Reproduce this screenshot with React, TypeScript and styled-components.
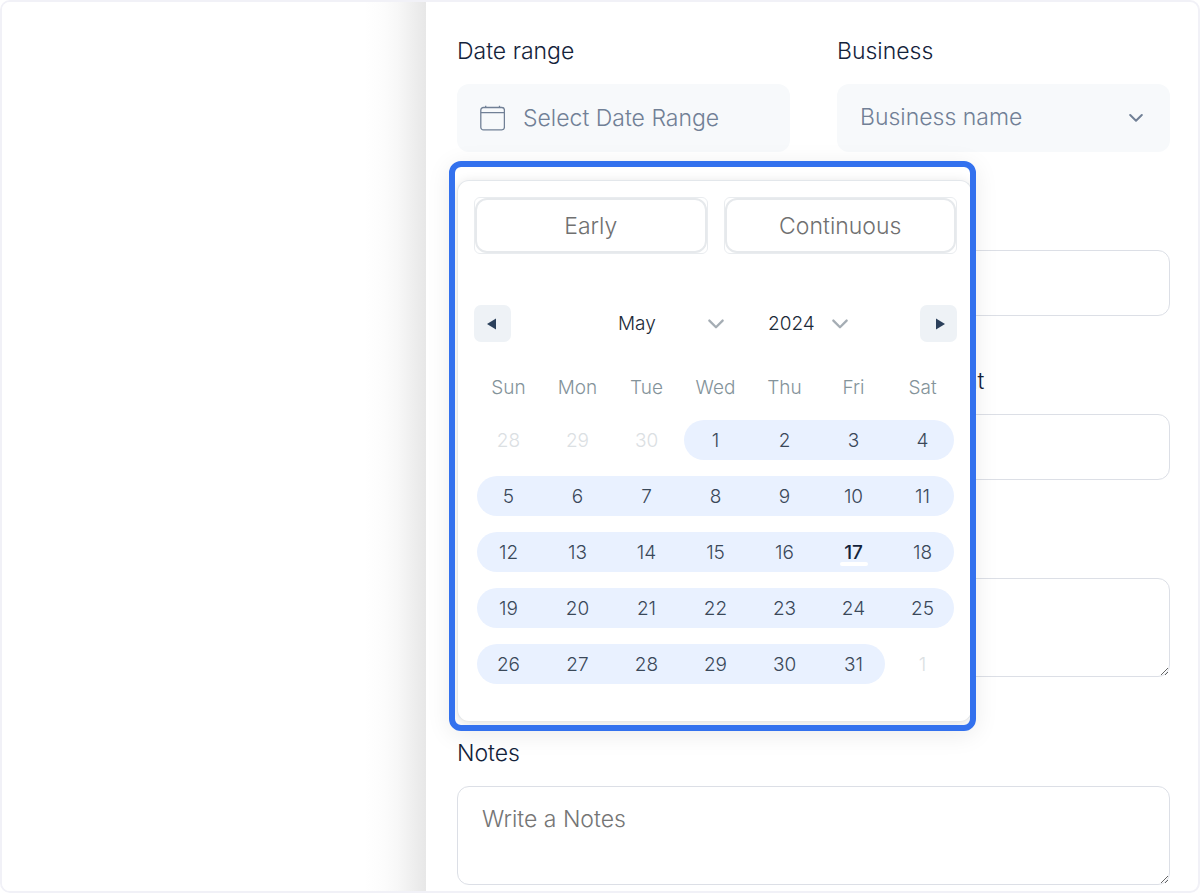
import React from "react";
import styled, { createGlobalStyle, css } from "styled-components";

const GlobalStyle = createGlobalStyle`
  *, *::before, *::after { box-sizing: border-box; }
  body {
    margin: 0;
    background: #fff;
    color: #14233b;
    font-family: Inter, "Open Sans", "Liberation Sans", sans-serif;
    font-weight: 300;
  }
  button, input, select, textarea { font: inherit; color: inherit; }
`;

const Frame = styled.div`
  display: flex;
  min-height: 100vh;
  border: 2px solid #f1f1f7;
  border-radius: 10px;
  overflow: hidden;
`;

const Backdrop = styled.div`
  flex: 1;
  background: linear-gradient(to left, #e7e7e7, #efefef 14px, #f7f7f7 28px, #fcfcfc 42px, #fff 62px);
`;

const Drawer = styled.form`
  flex: 0 1 772px;
  display: grid;
  grid-template-columns: repeat(2, minmax(0, 1fr));
  column-gap: 47px;
  row-gap: 49px;
  align-content: start;
  padding: 33px 28px 5px 31px;
`;

const Field = styled.div<{ $wide?: boolean; $right?: boolean }>`
  position: relative;
  display: flex;
  flex-direction: column;
  gap: 16px;
  ${(p) => p.$wide && css`grid-column: 1 / -1;`}
  ${(p) => p.$right && css`grid-column: 2;`}
`;

const Label = styled.label`
  min-height: 33px;
  font-size: 23px;
  line-height: 33px;
`;

const FilledBox = styled.div`
  position: relative;
  display: flex;
  align-items: center;
  gap: 18px;
  height: 68px;
  padding: 0 27px 0 23px;
  border-radius: 12px;
  background: #f7f9fb;
  color: #718096;
  font-size: 23px;

  > svg { flex: none; pointer-events: none; }
`;

const FilledInput = styled.input`
  flex: 1;
  min-width: 0;
  padding: 0;
  border: 0;
  outline: 0;
  background: transparent;
  &::placeholder { color: #718096; opacity: 1; }
`;

const FilledSelect = styled.select`
  flex: 1;
  min-width: 0;
  padding: 0 0 2px;
  border: 0;
  outline: 0;
  appearance: none;
  background: transparent;
`;

const TextInput = styled.input`
  height: 66px;
  padding: 0 24px;
  border: 1px solid #dcdfe6;
  border-radius: 12px;
  background: #fff;
  font-size: 23px;
`;

const TextArea = styled.textarea`
  display: block;
  height: 99px;
  padding: 16px 24px;
  border: 1px solid #dcdfe6;
  border-radius: 12px;
  background: #fff;
  font-size: 23px;
  line-height: 32px;
  resize: vertical;
  &::placeholder { color: #757575; opacity: 1; }
`;

const DetailsField = styled(Field)`
  padding: 49px 0 11px;
`;

const Popover = styled.div`
  position: absolute;
  z-index: 2;
  top: calc(100% + 9px);
  left: -8px;
  width: 527px;
  padding: 13px 0 3px 2px;
  border: 6px solid #3371ee;
  border-radius: 12px;
  overflow: hidden;
  background: #fff;
  box-shadow: 0 4px 24px rgba(0, 0, 0, 0.08);
`;

const Calendar = styled.div`
  margin-right: -2px;
  padding: 16px 14px 29px 16px;
  border: 1px solid #e3e7eb;
  border-bottom-color: #e8e8e8;
  border-radius: 12px;
  background: #fff;
  box-shadow: 0 2px 12px rgba(0, 0, 0, 0.12);
`;

const Presets = styled.div`
  display: grid;
  grid-template-columns: 1fr 1fr;
  gap: 16px;
`;

const PresetShell = styled.div`
  display: flex;
  height: 57px;
  border: 1px solid #e9ecef;
  border-radius: 6px;
`;

const PresetButton = styled.button`
  flex: 1;
  padding: 0;
  border: 2px solid #e6e9ec;
  border-radius: 12px;
  background: #fff;
  color: #707070;
  font-size: 23px;
  cursor: pointer;
`;

const MonthBar = styled.div`
  display: flex;
  align-items: center;
  margin: 51px 0 20px;
`;

const StepButton = styled.button`
  display: flex;
  align-items: center;
  justify-content: center;
  width: 37px;
  height: 37px;
  padding: 0;
  border: 0;
  border-radius: 7px;
  background: #eef2f6;
  color: #2b405b;
  cursor: pointer;
`;

const Pickers = styled.div`
  flex: 1;
  display: flex;
  justify-content: center;
  gap: 44px;
  padding-left: 35px;
`;

const Picker = styled.div<{ $width: number }>`
  position: relative;
  display: flex;
  align-items: center;
  width: ${(p) => p.$width}px;

  svg {
    position: absolute;
    right: 0;
    color: #a5adb4;
    pointer-events: none;
  }
`;

const PickerSelect = styled.select`
  width: 100%;
  padding: 0;
  border: 0;
  outline: 0;
  appearance: none;
  background: transparent;
  color: #1c2b39;
  font-size: 19px;
  line-height: 28px;
`;

const Month = styled.table`
  width: 100%;
  table-layout: fixed;
  border-collapse: collapse;
  font-size: 19px;
`;

const WeekDay = styled.th`
  height: 50px;
  padding: 0;
  color: #84939a;
  font-weight: 300;
`;

const DayCell = styled.td<{ $first: boolean; $last: boolean }>`
  height: 56px;
  padding: 0 ${(p) => (p.$last ? 3 : 0)}px 0 ${(p) => (p.$first ? 3 : 0)}px;
`;

const Day = styled.button<{ $inRange: boolean; $first: boolean; $last: boolean; $today: boolean }>`
  position: relative;
  display: flex;
  align-items: center;
  justify-content: center;
  width: 100%;
  height: 40px;
  padding: 0 ${(p) => (p.$first ? 3 : 0)}px 0 ${(p) => (p.$last ? 3 : 0)}px;
  border: 0;
  border-radius: ${(p) => `${p.$first ? 20 : 0}px ${p.$last ? 20 : 0}px ${p.$last ? 20 : 0}px ${p.$first ? 20 : 0}px`};
  background: ${(p) => (p.$inRange ? "#e9f1ff" : "transparent")};
  color: ${(p) => (p.$inRange ? "#3a4859" : "#dbe0e3")};
  cursor: pointer;

  ${(p) =>
    p.$today &&
    css`
      color: #14233b;
      font-weight: 500;
      &::after {
        content: "";
        position: absolute;
        bottom: 6px;
        width: 28px;
        height: 4px;
        border-radius: 2px;
        background: #fff;
      }
    `}
`;

const CalendarIcon = () => (
  <svg width="25" height="26" viewBox="0 0 25 26" fill="none" stroke="currentColor" strokeWidth="1.3" aria-hidden="true">
    <rect x="0.8" y="2.5" width="23.6" height="22.4" rx="2.6" />
    <path d="M0.8 7.6H24.4M5.7 0.8V2.5M19.5 0.8V2.5" />
  </svg>
);

const Chevron = ({ size, stroke }: { size: number; stroke: number }) => (
  <svg width={size} height={size} viewBox="0 0 14 14" fill="none" stroke="currentColor" strokeWidth={stroke} strokeLinecap="round" strokeLinejoin="round" aria-hidden="true">
    <path d="M1.2 4L7 9.8L12.8 4" />
  </svg>
);

const Triangle = ({ left }: { left?: boolean }) => (
  <svg width="12" height="12" viewBox="0 0 12 12" fill="currentColor" aria-hidden="true">
    <path d={left ? "M9 0.5V11.5L0 6Z" : "M3 0.5V11.5L12 6Z"} />
  </svg>
);

const weekDays = ["Sun", "Mon", "Tue", "Wed", "Thu", "Fri", "Sat"];
const TODAY = 17;

type DayInfo = { day: number; inMonth: boolean };

const weeks: DayInfo[][] = Array.from({ length: 5 }, (_, w) =>
  Array.from({ length: 7 }, (_, d) => {
    const n = w * 7 + d - 2;
    if (n < 1) return { day: n + 30, inMonth: false };
    if (n > 31) return { day: n - 31, inMonth: false };
    return { day: n, inMonth: true };
  })
);

function DateRangePopover() {
  return (
    <Popover role="dialog" aria-label="Date range">
      <Calendar>
        <Presets>
          {["Early", "Continuous"].map((name) => (
            <PresetShell key={name}>
              <PresetButton type="button">{name}</PresetButton>
            </PresetShell>
          ))}
        </Presets>
        <MonthBar>
          <StepButton type="button" aria-label="Previous month">
            <Triangle left />
          </StepButton>
          <Pickers>
            <Picker $width={106}>
              <PickerSelect aria-label="Month" defaultValue="May">
                <option>May</option>
              </PickerSelect>
              <Chevron size={16} stroke={2} />
            </Picker>
            <Picker $width={80}>
              <PickerSelect aria-label="Year" defaultValue="2024">
                <option>2024</option>
              </PickerSelect>
              <Chevron size={16} stroke={2} />
            </Picker>
          </Pickers>
          <StepButton type="button" aria-label="Next month">
            <Triangle />
          </StepButton>
        </MonthBar>
        <Month>
          <thead>
            <tr>
              {weekDays.map((name) => (
                <WeekDay key={name} scope="col">{name}</WeekDay>
              ))}
            </tr>
          </thead>
          <tbody>
            {weeks.map((week, w) => (
              <tr key={w}>
                {week.map(({ day, inMonth }, d) => {
                  const first = inMonth && (d === 0 || !week[d - 1].inMonth);
                  const last = inMonth && (d === 6 || !week[d + 1].inMonth);
                  return (
                    <DayCell key={d} $first={first} $last={last}>
                      <Day type="button" $inRange={inMonth} $first={first} $last={last} $today={inMonth && day === TODAY}>
                        {day}
                      </Day>
                    </DayCell>
                  );
                })}
              </tr>
            ))}
          </tbody>
        </Month>
      </Calendar>
    </Popover>
  );
}

export default function App() {
  return (
    <>
      <GlobalStyle />
      <Frame>
        <Backdrop />
        <Drawer>
          <Field>
            <Label htmlFor="range">Date range</Label>
            <FilledBox>
              <CalendarIcon />
              <FilledInput id="range" placeholder="Select Date Range" readOnly />
            </FilledBox>
            <DateRangePopover />
          </Field>
          <Field>
            <Label htmlFor="business">Business</Label>
            <FilledBox>
              <FilledSelect id="business" defaultValue="">
                <option value="">Business name</option>
              </FilledSelect>
              <Chevron size={14} stroke={2} />
            </FilledBox>
          </Field>
          <Field $right>
            <Label htmlFor="price" />
            <TextInput id="price" aria-label="Price" />
          </Field>
          <Field $right>
            <Label htmlFor="amount">Sales Amount</Label>
            <TextInput id="amount" />
          </Field>
          <DetailsField $wide>
            <TextArea id="details" aria-label="Details" />
          </DetailsField>
          <Field $wide>
            <Label htmlFor="notes">Notes</Label>
            <TextArea id="notes" placeholder="Write a Notes" />
          </Field>
        </Drawer>
      </Frame>
    </>
  );
}
